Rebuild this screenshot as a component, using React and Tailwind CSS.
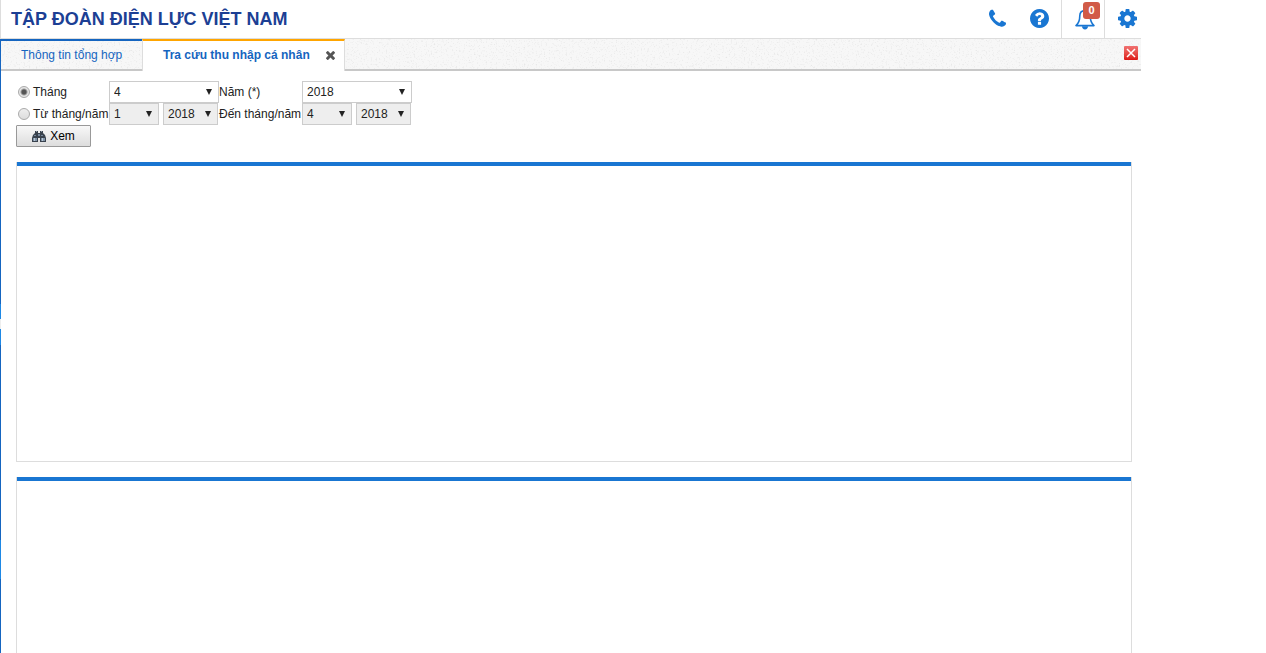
import { useState } from "react";

const MONTHS = ["1", "2", "3", "4", "5", "6", "7", "8", "9", "10", "11", "12"];
const YEARS = ["2016", "2017", "2018"];

function PhoneIcon() {
  return (
    <svg viewBox="0 0 1408 1792" className="h-[22px] w-[17px]" fill="currentColor" aria-hidden="true">
      <path d="M1408 1240q0 27-10 70.5t-21 68.5q-21 50-122 106-94 51-186 51-27 0-53-3.5t-57.5-12.5-47-14.5-55.5-20.5-49-18q-98-35-175-83-127-79-264-216t-216-264q-48-77-83-175-3-9-18-49t-20.5-55.5-14.5-47-12.5-57.5-3.5-53q0-92 51-186 56-101 106-122 25-11 68.5-21t70.5-10q14 0 21 3 18 6 53 76 11 19 30 54t35 63.5 31 53.5q3 4 17.5 25t21.5 35.5 7 28.5q0 20-28.5 50t-62 55-62 53-28.5 46q0 9 5 22.5t8.5 20.5 14 24 11.5 19q76 137 174 235t235 174q2 1 19 11.5t24 14 20.5 8.5 22.5 5q18 0 46-28.5t53-62 55-62 50-28.5q14 0 28.5 7t35.5 21.5 25 17.5q25 15 53.5 31t63.5 35 54 30q70 35 76 53 3 7 3 21z" />
    </svg>
  );
}

function HelpIcon() {
  return (
    <svg viewBox="128 128 1536 1536" className="size-[19px]" fill="currentColor" aria-hidden="true">
      <path d="M1024 1376v-192q0-14-9-23t-23-9h-192q-14 0-23 9t-9 23v192q0 14 9 23t23 9h192q14 0 23-9t9-23zm256-672q0-88-55.5-163t-138.5-116-170-41q-243 0-371 213-15 24 8 42l132 100q7 6 19 6 16 0 25-12 53-68 86-92 34-24 86-24 48 0 85.5 26t37.5 59q0 38-20 61t-68 45q-63 28-115.5 86.5t-52.5 125.5v36q0 14 9 23t23 9h192q14 0 23-9t9-23q0-19 21.5-49.5t54.5-49.5q32-18 49-28.5t46-35 44.5-48 28-60.5 12.5-81zm384 192q0 209-103 385.5t-279.5 279.5-385.5 103-385.5-103-279.5-279.5-103-385.5 103-385.5 279.5-279.5 385.5-103 385.5 103 279.5 279.5 103 385.5z" />
    </svg>
  );
}

function BellIcon() {
  return (
    <svg viewBox="0 0 20 22" className="h-[22px] w-5" fill="none" stroke="currentColor" strokeWidth="1.6" aria-hidden="true">
      <path d="M10 2.6c-3.200 0-5.200 2.200-5.200 5.200 0 5.200-1.400 7.800-3.800 9.800h18c-2.400-2-3.800-4.600-3.800-9.800 0-3-2-5.200-5.200-5.200z" strokeLinejoin="round" />
      <path d="M10 .8v2" />
      <path d="M7 18.200h6c0 1.900-1.200 3.200-3 3.200s-3-1.300-3-3.200z" fill="currentColor" stroke="none" />
    </svg>
  );
}

function CogIcon() {
  return (
    <svg viewBox="128 128 1536 1536" className="size-[19px]" fill="currentColor" aria-hidden="true">
      <path d="M1152 896q0-106-75-181t-181-75-181 75-75 181 75 181 181 75 181-75 75-181zm512-109v222q0 12-8 23t-20 13l-185 28q-19 54-39 91 35 50 107 138 10 12 10 25t-9 23q-27 37-99 108t-94 71q-12 0-26-9l-138-108q-44 23-91 38-16 136-29 186-7 28-36 28h-222q-14 0-24.500-8.500t-11.500-21.500l-28-184q-49-16-90-37l-141 107q-10 9-25 9-14 0-25-11-126-114-165-168-7-10-7-23 0-12 8-23 15-21 51-66.500t54-70.500q-27-50-41-99l-183-27q-13-2-21-12.500t-8-23.500v-222q0-12 8-23t19-13l186-28q14-46 39-92-40-57-107-138-10-12-10-24 0-10 9-23 26-36 98.500-107.500t94.500-71.500q13 0 26 10l138 107q44-23 91-38 16-136 29-186 7-28 36-28h222q14 0 24.500 8.500t11.500 21.500l28 184q49 16 90 37l142-107q9-9 24-9 13 0 25 10 129 119 165 170 7 8 7 22 0 12-8 23-15 21-51 66.500t-54 70.500q26 50 41 98l183 28q13 2 21 12.500t8 23.500z" />
    </svg>
  );
}

function TimesIcon() {
  return (
    <svg viewBox="302 366 1188 1188" className="size-[9px]" fill="currentColor" aria-hidden="true">
      <path d="M1490 1322q0 40-28 68l-136 136q-28 28-68 28t-68-28l-294-294-294 294q-28 28-68 28t-68-28l-136-136q-28-28-28-68t28-68l294-294-294-294q-28-28-28-68t28-68l136-136q28-28 68-28t68 28l294 294 294-294q28-28 68-28t68 28l136 136q28 28 28 68t-28 68l-294 294 294 294q28 28 28 68z" />
    </svg>
  );
}

function BinocularsIcon() {
  return (
    <svg viewBox="0 0 14 13" className="h-[13px] w-3.5" aria-hidden="true">
      <path d="M3 1h3v2h2V1h3v2l2 2 1 3v4H8V8H6v4H0V8l1-3 2-2z" fill="#39424d" />
      <path d="M4 1h1v1H4zM9 1h1v1H9z" fill="#8d99a6" />
      <path d="M2 5h2v1H2zM9 5h2v1H9zM6 4h2v2H6z" fill="#75869a" />
      <path d="M1 8h4v3H1zM9 8h4v3H9z" fill="#7f93a8" />
      <path d="M2 8h1v3H2zM10 8h1v3h-1z" fill="#bcc8d4" />
    </svg>
  );
}

function SpeckledFill() {
  return (
    <svg className="absolute inset-0 size-full" aria-hidden="true">
      <filter id="speckle">
        <feTurbulence type="fractalNoise" baseFrequency="0.6" numOctaves="2" seed="4" />
        <feColorMatrix values="0 0 0 0 0.6  0 0 0 0 0.6  0 0 0 0 0.6  1.200 0 0 0 -0.660" />
      </filter>
      <rect width="100%" height="100%" filter="url(#speckle)" />
    </svg>
  );
}

function PlainSelect({ label, options, value, onChange, muted = false, className }) {
  return (
    <span className={`relative inline-flex h-[22px] ${className}`}>
      <select
        aria-label={label}
        value={value}
        onChange={(event) => onChange(event.target.value)}
        className={`h-full w-full appearance-none border border-[#ccc] pl-1 text-xs text-[#222] ${muted ? "bg-[#eee]" : "bg-white"}`}
      >
        {options.map((option) => (
          <option key={option}>{option}</option>
        ))}
      </select>
      <svg viewBox="0 0 6 6" className="pointer-events-none absolute top-2 right-[7px] size-1.5" aria-hidden="true">
        <path d="M0 0h6L3 6z" fill="#222" />
      </svg>
    </span>
  );
}

function ModeRadio({ label, checked, onChange }) {
  return (
    <label className="flex items-center gap-[3px] pl-0.5">
      <input
        type="radio"
        name="mode"
        checked={checked}
        onChange={onChange}
        className="size-3 shrink-0 appearance-none rounded-full border border-[#aaa] bg-linear-to-b from-[#eee] to-[#ddd] checked:bg-[radial-gradient(circle,#555_0_2px,#e6e6e6_4px)]"
      />
      {label}
    </label>
  );
}

function ResultPanel() {
  return (
    <section className="flex h-[300px] flex-col border border-t-0 border-[#ddd]">
      <div className="h-1 bg-[#1976d2]" />
    </section>
  );
}

function App() {
  const [mode, setMode] = useState("month");
  const [month, setMonth] = useState("4");
  const [year, setYear] = useState("2018");
  const [fromMonth, setFromMonth] = useState("1");
  const [fromYear, setFromYear] = useState("2018");
  const [toMonth, setToMonth] = useState("4");
  const [toYear, setToYear] = useState("2018");

  return (
    <div className="h-screen overflow-hidden bg-white pr-[125px] font-['Liberation_Sans',Arial,sans-serif] text-xs text-[#222]">
      <header className="flex h-[39px] items-stretch justify-between border-b border-l border-[#ddd] pl-2.5">
        <h1 className="text-lg leading-[38px] font-bold text-[#1c3f94]">TẬP ĐOÀN ĐIỆN LỰC VIỆT NAM</h1>
        <nav className="flex text-[#1976d2]">
          <button type="button" aria-label="Điện thoại" className="flex w-[42px] items-center justify-center">
            <PhoneIcon />
          </button>
          <button type="button" aria-label="Trợ giúp" className="flex w-[43px] items-center justify-center pb-0.5">
            <HelpIcon />
          </button>
          <button
            type="button"
            aria-label="Thông báo"
            className="relative flex w-11 items-center justify-center border-x border-[#ddd] pl-1"
          >
            <BellIcon />
            <span className="absolute top-0.5 right-1 size-[17px] rounded-[3px] bg-[#d15b47] text-center text-[11px] leading-[17px] font-bold text-white">
              0
            </span>
          </button>
          <button type="button" aria-label="Cài đặt" className="flex w-9 items-center justify-end pr-1 pb-0.5">
            <CogIcon />
          </button>
        </nav>
      </header>

      <div className="flex h-full">
        <div className="w-px shrink-0 bg-[linear-gradient(#1565c0_0_265px,#1e88e5_265px_280px,#eee_280px_290px,#1e88e5_290px_306px,#1565c0_306px_501px,#1e88e5_501px_540px,#1565c0_540px)]" />
        <main className="min-w-0 flex-1">
          <div className="relative bg-[#f7f7f7]">
            <SpeckledFill />
            <div className="relative flex h-8">
              <a
                href="#tong-hop"
                className="w-[141px] border-t-2 border-b-2 border-t-[#1565c0] border-b-[#c8c8c8] pl-5 leading-7 text-[#1565c0]"
              >
                Thông tin tổng hợp
              </a>
              <div className="flex w-[203px] items-center justify-between border-x border-t-2 border-x-[#ddd] border-t-[#ffa500] bg-white pr-[9px] pb-0.5 pl-5">
                <a href="#thu-nhap" className="font-bold text-[#1565c0]">
                  Tra cứu thu nhập cá nhân
                </a>
                <button type="button" aria-label="Đóng thẻ" className="text-[#555]">
                  <TimesIcon />
                </button>
              </div>
              <div className="flex flex-1 items-center justify-end border-b-2 border-[#c8c8c8] pr-[3px] pb-0.5">
                <button
                  type="button"
                  aria-label="Đóng tất cả"
                  className="size-3.5 rounded-[1px] bg-linear-to-b from-[#f07070] to-[#dd1111]"
                >
                  <svg viewBox="0 0 14 14" className="size-3.5" stroke="#fff" strokeWidth="1.5" aria-hidden="true">
                    <path d="M3 3l8 8M11 3l-8 8" />
                  </svg>
                </button>
              </div>
            </div>
          </div>

          <form className="px-[15px] pt-2.5" onSubmit={(event) => event.preventDefault()}>
            <div className="grid w-fit grid-cols-[93px_110px_83px_110px] items-center whitespace-nowrap">
              <ModeRadio label="Tháng" checked={mode === "month"} onChange={() => setMode("month")} />
              <PlainSelect label="Tháng" options={MONTHS} value={month} onChange={setMonth} className="w-[110px]" />
              <span>Năm (*)</span>
              <PlainSelect label="Năm" options={YEARS} value={year} onChange={setYear} className="w-[110px]" />

              <ModeRadio label="Từ tháng/năm" checked={mode === "range"} onChange={() => setMode("range")} />
              <div className="flex gap-1">
                <PlainSelect label="Từ tháng" options={MONTHS} value={fromMonth} onChange={setFromMonth} muted className="w-[50px]" />
                <PlainSelect label="Từ năm" options={YEARS} value={fromYear} onChange={setFromYear} muted className="w-[55px]" />
              </div>
              <span>Đến tháng/năm</span>
              <div className="flex gap-1">
                <PlainSelect label="Đến tháng" options={MONTHS} value={toMonth} onChange={setToMonth} muted className="w-[50px]" />
                <PlainSelect label="Đến năm" options={YEARS} value={toYear} onChange={setToYear} muted className="w-[55px]" />
              </div>
            </div>
            <button
              type="submit"
              className="flex h-[22px] w-[75px] items-center justify-center gap-1 rounded-[1px] border border-[#999] bg-linear-to-b from-[#f8f8f8] to-[#ddd] text-black"
            >
              <BinocularsIcon />
              Xem
            </button>
          </form>

          <div className="space-y-[15px] pt-[15px] pr-[9px] pl-[15px]">
            <ResultPanel />
            <ResultPanel />
          </div>
        </main>
      </div>
    </div>
  );
}

export default App;
